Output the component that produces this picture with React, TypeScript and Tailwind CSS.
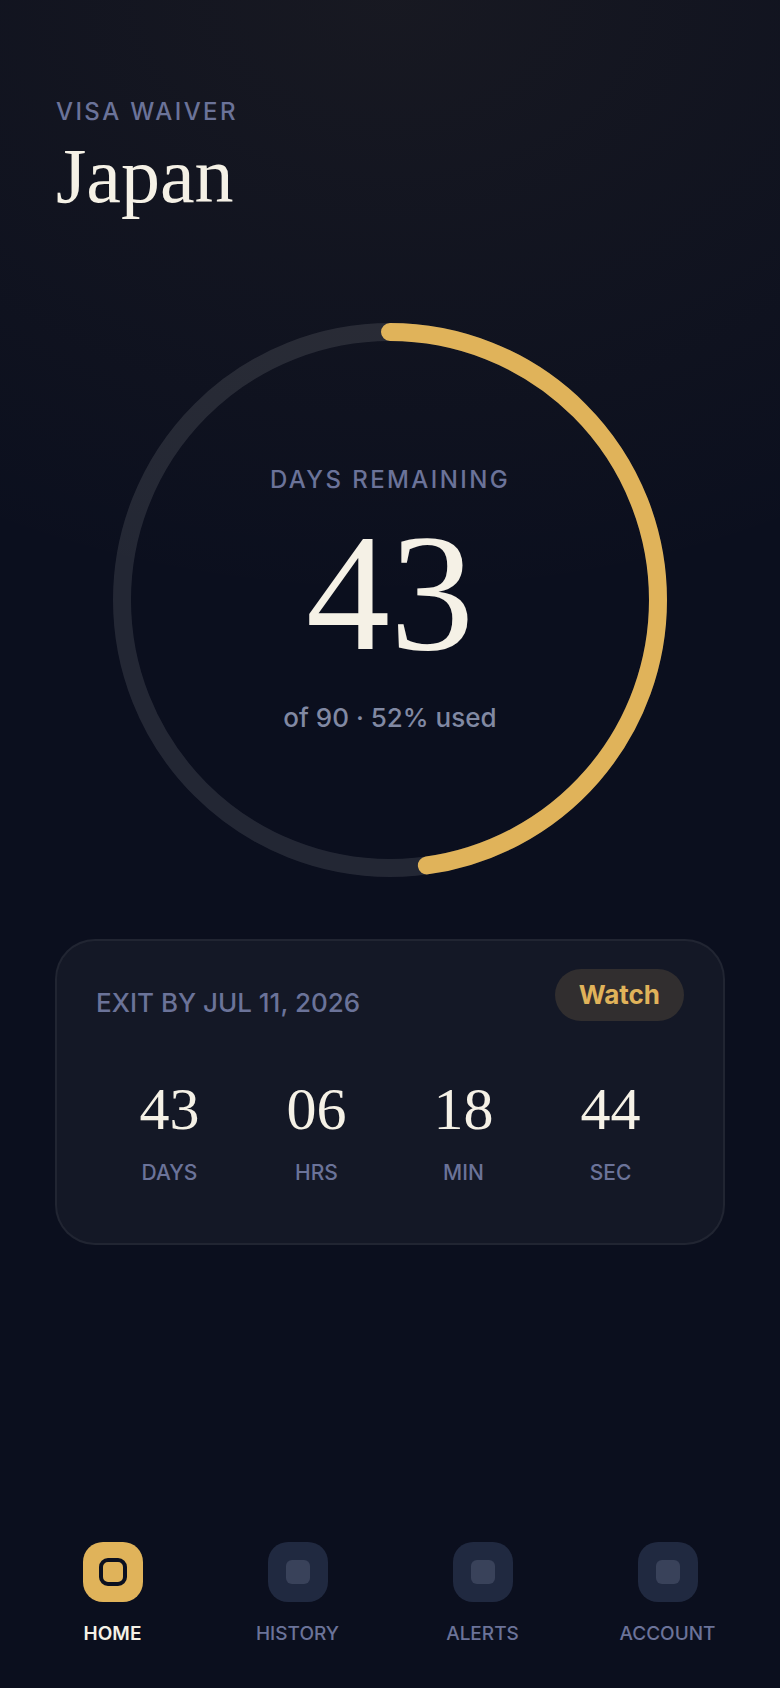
import React from "react";

const TOTAL_DAYS = 90;
const DAYS_LEFT = 43;
const RADIUS = 268;
const CIRCUMFERENCE = 2 * Math.PI * RADIUS;

const countdown = [
  { value: "43", label: "DAYS" },
  { value: "06", label: "HRS" },
  { value: "18", label: "MIN" },
  { value: "44", label: "SEC" },
];

const tabs = [
  { label: "HOME", active: true },
  { label: "HISTORY", active: false },
  { label: "ALERTS", active: false },
  { label: "ACCOUNT", active: false },
];

const Header = () => {
  return (
    <header className="px-14 pt-24">
      <p className="text-2xl leading-8 font-medium tracking-widest text-[#6b7399]">
        VISA WAIVER
      </p>
      <h1 className="mt-2 font-['Liberation_Serif',serif] text-[78px] leading-[80px] text-[#f5f1e6]">
        Japan
      </h1>
    </header>
  );
};

const Ring = () => {
  return (
    <section className="mt-26 grid place-items-center px-10">
      <svg
        viewBox="0 0 560 560"
        className="col-start-1 row-start-1 w-full max-w-[560px] -rotate-90"
        fill="none"
        strokeWidth="18"
        aria-hidden="true"
      >
        <circle cx="280" cy="280" r={RADIUS} stroke="#fff" strokeOpacity="0.1" />
        <circle
          cx="280"
          cy="280"
          r={RADIUS}
          stroke="#e0b35a"
          strokeLinecap="round"
          strokeDasharray={`${(CIRCUMFERENCE * DAYS_LEFT) / TOTAL_DAYS} ${CIRCUMFERENCE}`}
        />
      </svg>
      <div className="col-start-1 row-start-1 flex flex-col items-center">
        <p className="text-2xl leading-8 font-medium tracking-widest text-[#6b7399]">
          DAYS REMAINING
        </p>
        <p className="mb-3 font-['Liberation_Serif',serif] text-[168px] leading-[192px] text-[#f5f1e6]">
          {DAYS_LEFT}
        </p>
        <p className="text-[26px] leading-9 font-medium text-[#8189a3]">
          of 90 · 52% used
        </p>
      </div>
    </section>
  );
};

const ExitCard = () => {
  return (
    <section className="mx-[55px] mt-[59px] rounded-[40px] border-2 border-white/6 bg-[#141826] px-[39px] pt-7 pb-[54px]">
      <div className="flex items-end justify-between">
        <h2 className="text-[26px] leading-9 font-medium text-[#6b7399]">
          EXIT BY JUL 11, 2026
        </h2>
        <span className="rounded-full bg-[#312e2f] px-6 py-2 text-[26px] leading-9 font-bold text-[#e0b35a]">
          Watch
        </span>
      </div>
      <div className="mt-14 grid grid-cols-4">
        {countdown.map((item) => (
          <div key={item.label} className="flex flex-col items-center">
            <span className="font-['Liberation_Serif',serif] text-6xl leading-[64px] text-[#f5f1e6]">
              {item.value}
            </span>
            <span className="mt-4 text-[21px] leading-8 font-medium text-[#6b7399]">
              {item.label}
            </span>
          </div>
        ))}
      </div>
    </section>
  );
};

const TabBar = () => {
  return (
    <nav className="mt-auto grid grid-cols-4 px-5 pt-20 pb-10">
      {tabs.map((tab) => (
        <a
          key={tab.label}
          href="#"
          aria-current={tab.active ? "page" : undefined}
          className="flex flex-col items-center gap-[18px]"
        >
          <span
            className={
              tab.active
                ? "flex size-15 items-center justify-center rounded-[20px] bg-[#e0b35a]"
                : "flex size-15 items-center justify-center rounded-[20px] bg-[#202940]"
            }
          >
            <span
              className={
                tab.active
                  ? "size-7 rounded-[9px] border-4 border-[#0b1020]"
                  : "size-6 rounded-md bg-[#39425a]"
              }
            />
          </span>
          <span
            className={
              tab.active
                ? "text-[19px] leading-7 font-semibold text-[#f5f1e6]"
                : "text-[19px] leading-7 font-medium text-[#6b7399]"
            }
          >
            {tab.label}
          </span>
        </a>
      ))}
    </nav>
  );
};

const App = () => {
  return (
    <main className="flex min-h-screen flex-col bg-[#0b0f1e] bg-[radial-gradient(ellipse_110%_36%_at_50%_0%,rgba(224,179,90,0.06),transparent)] font-[Inter,sans-serif]">
      <Header />
      <Ring />
      <ExitCard />
      <TabBar />
    </main>
  );
};

export default App;
